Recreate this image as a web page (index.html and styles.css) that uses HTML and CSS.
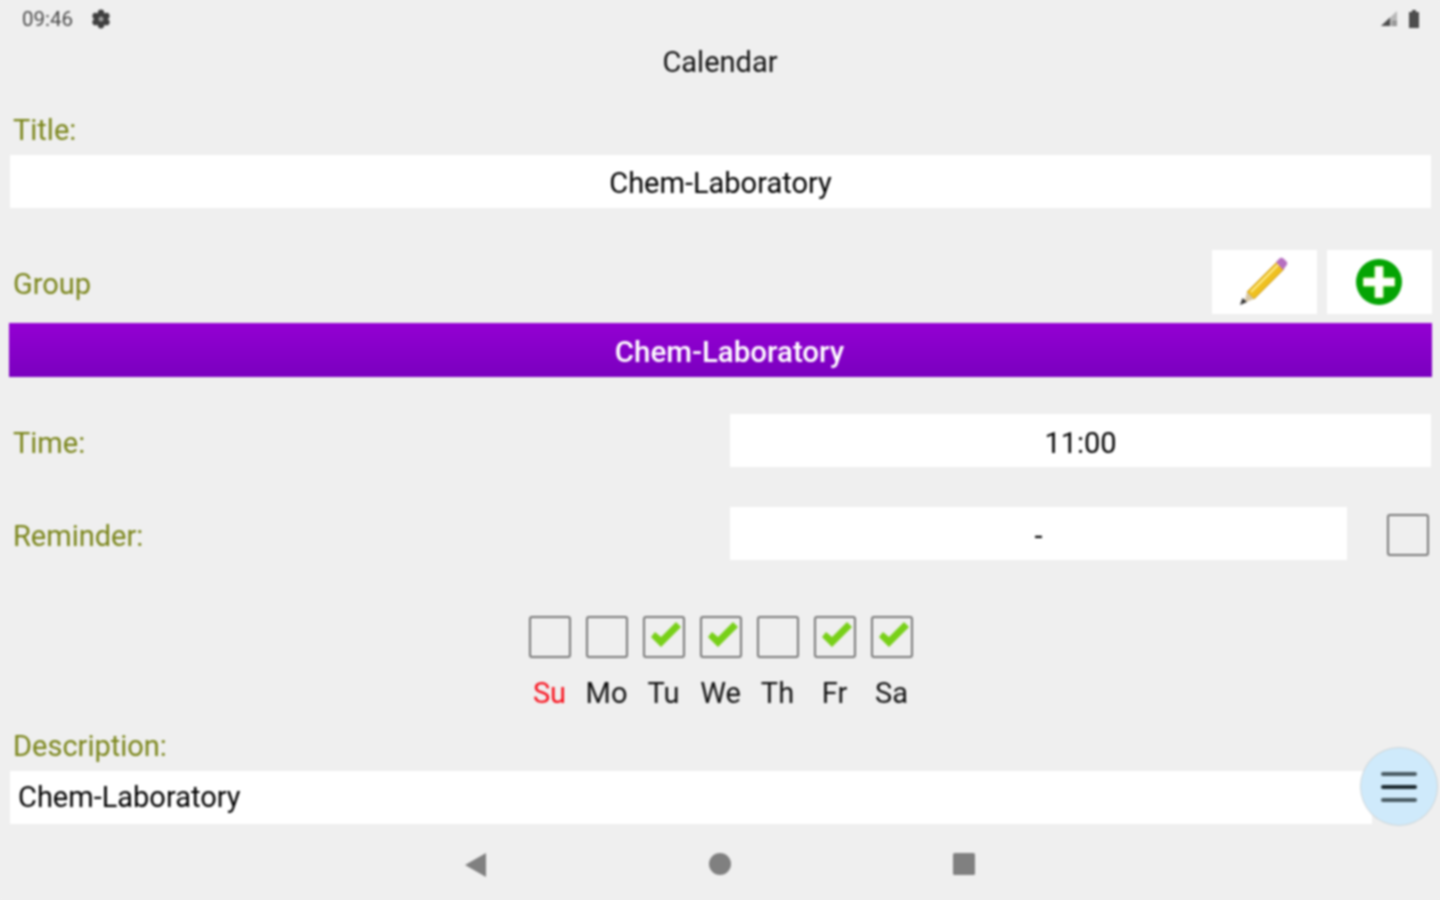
FILE: index.html
```html
<!DOCTYPE html>
<html lang="en">
<head>
<meta charset="utf-8">
<title>Calendar</title>
<link rel="stylesheet" href="styles.css">
</head>
<body>
<div class="screen">
  <div class="status">
    <div class="status-left">
      <span class="clock">09:46</span>
      <svg class="gear" width="20" height="20" viewBox="0 0 24 24"><g fill="#3f3f3f"><circle cx="12" cy="4.500" r="3.800"/><circle cx="12" cy="19.500" r="3.800"/><circle cx="5.500" cy="8.250" r="3.800"/><circle cx="18.500" cy="8.250" r="3.800"/><circle cx="5.500" cy="15.750" r="3.800"/><circle cx="18.500" cy="15.750" r="3.800"/><circle cx="12" cy="12" r="7"/></g><circle cx="12" cy="12" r="3" fill="#9a9a9a"/></svg>
    </div>
    <div class="status-right">
      <svg width="18" height="18" viewBox="0 0 18 18"><path fill="#b8b8b8" d="M17 1v15H1z"/><path fill="#4d4d4d" d="M1 16l9-8.500V16z"/><rect x="12" y="11" width="5" height="2" fill="#8a8a8a"/><rect x="12" y="14" width="5" height="2" fill="#8a8a8a"/></svg>
      <svg width="12" height="20" viewBox="0 0 12 20"><path fill="#4d4d4d" d="M4 1h4v2h3v16H1V3h3z"/></svg>
    </div>
  </div>
  <div class="app-title">Calendar</div>

  <div class="label label-title">Title:</div>
  <div class="field field-full">Chem-Laboratory</div>

  <div class="group-row">
    <div class="label label-low">Group</div>
    <div class="tools">
      <div class="tool">
        <svg class="pencil" width="50" height="50" viewBox="0 0 50 50">
          <path fill="#efc01f" stroke="#c9960f" stroke-width="1" d="M8 35 L38 5 L45 12 L15 42 Z"/>
          <path fill="none" stroke="#fbe88a" stroke-width="2" d="M12 35 L40 7"/>
          <path fill="#b66fc0" d="M37 5 L41 1 Q43 0 45 2 L48 5 Q49 7 47 9 L44 13 Z"/>
          <path fill="#d8c8a8" d="M8 35 L15 42 L5 46 Z"/>
          <path fill="#333" d="M3.500 41 L8 45 L1 48 Z"/>
        </svg>
      </div>
      <div class="tool">
        <svg class="plus" width="48" height="48" viewBox="0 0 48 48">
          <circle cx="24" cy="24" r="23" fill="#04a404"/>
          <path fill="#fff" stroke="#d9f5a8" stroke-width="1" d="M20 8.500h8V20h11.500v8H28v11.500h-8V28H8.500v-8H20z"/>
        </svg>
      </div>
    </div>
  </div>
  <div class="group-bar">Chem-Laboratory</div>

  <div class="row row-time">
    <div class="label label-low">Time:</div>
    <div class="field field-half">11:00</div>
  </div>
  <div class="row row-reminder">
    <div class="label label-low">Reminder:</div>
    <div class="reminder-right">
      <div class="field field-reminder">-</div>
      <span class="box box-reminder"></span>
    </div>
  </div>

  <div class="days">
    <div class="day"><span class="box"></span><span class="day-name sun">Su</span></div>
    <div class="day"><span class="box"></span><span class="day-name">Mo</span></div>
    <div class="day"><span class="box"><svg class="tick" viewBox="0 0 42 42"><path d="M8 21l4-5 6 5L33 6l5 5-20 20z"/></svg></span><span class="day-name">Tu</span></div>
    <div class="day"><span class="box"><svg class="tick" viewBox="0 0 42 42"><path d="M8 21l4-5 6 5L33 6l5 5-20 20z"/></svg></span><span class="day-name">We</span></div>
    <div class="day"><span class="box"></span><span class="day-name">Th</span></div>
    <div class="day"><span class="box"><svg class="tick" viewBox="0 0 42 42"><path d="M8 21l4-5 6 5L33 6l5 5-20 20z"/></svg></span><span class="day-name">Fr</span></div>
    <div class="day"><span class="box"><svg class="tick" viewBox="0 0 42 42"><path d="M8 21l4-5 6 5L33 6l5 5-20 20z"/></svg></span><span class="day-name">Sa</span></div>
  </div>

  <div class="label label-desc">Description:</div>
  <div class="field field-desc">Chem-Laboratory</div>

  <div class="nav">
    <svg width="24" height="26" viewBox="0 0 24 26"><path fill="#808080" d="M22 1v24L1 13z"/></svg>
    <svg width="24" height="24" viewBox="0 0 24 24"><circle cx="12" cy="12" r="11" fill="#808080"/></svg>
    <svg width="24" height="24" viewBox="0 0 24 24"><rect x="1" y="1" width="22" height="22" rx="1.500" fill="#808080"/></svg>
  </div>

  <div class="fab"><span class="fab-line"></span><span class="fab-line fab-mid"></span><span class="fab-line"></span></div>
</div>
</body>
</html>
```
FILE: styles.css
```css
* { box-sizing: border-box; }
html, body { margin: 0; padding: 0; }
body { width: 1440px; height: 900px; overflow: hidden; background: #efefef; }
.screen {
  position: relative;
  width: 1440px;
  height: 900px;
  background: #efefef;
  font-family: Roboto, "Liberation Sans", sans-serif;
  font-size: 29px;
  color: #111;
  filter: blur(0.8px);
}
.status { height: 38px; display: flex; justify-content: space-between; align-items: center; padding: 0 20px 0 22px; }
.status-left, .status-right { display: flex; align-items: center; }
.status-left { gap: 18px; }
.status-right { gap: 10px; }
.clock { font-size: 20.5px; color: #4a4a4a; }
.gear { display: block; }
.app-title { height: 48px; line-height: 48px; text-align: center; }
.label { color: #7a851a; line-height: 40px; }
.label-title { margin: 24px 0 0 13px; height: 40px; line-height: 40px; }
.label-low { padding-top: 4px; }
.field { background: #fff; height: 53px; line-height: 56px; text-align: center; color: #000; }
.field-full { margin: 5px 9px 0 10px; }
.group-row { display: flex; justify-content: space-between; align-items: center; margin: 42px 8px 0 13px; height: 64px; }
.tools { display: flex; gap: 10px; }
.tool { width: 105px; height: 64px; background: #fff; display: flex; align-items: center; justify-content: center; }
.pencil { margin-left: -2px; }
.plus { margin-left: -2px; }
.group-bar {
  margin: 9px 8px 0 9px;
  height: 54px;
  line-height: 58px;
  padding-left: 18px;
  text-align: center;
  font-weight: 500;
  font-size: 29.5px;
  color: #fff;
  background: linear-gradient(#9400d3, #7a00bf);
}
.row { display: flex; align-items: center; justify-content: space-between; padding-left: 13px; }
.row-time { margin: 37px 9px 0 0; }
.row-reminder { margin: 40px 11px 0 0; }
.field-half { width: 701px; line-height: 58px; }
.reminder-right { display: flex; align-items: center; gap: 40px; }
.field-reminder { width: 617px; line-height: 58px; }
.box { display: block; position: relative; width: 42px; height: 42px; border: 2px solid #787878; border-radius: 3px; }
.box-reminder { top: 1px; }
.tick { position: absolute; left: -2px; top: -2px; width: 42px; height: 42px; }
.tick path { fill: #78d018; }
.days { display: flex; justify-content: center; gap: 15px; margin-top: 56px; padding-left: 1px; }
.day { width: 42px; display: flex; flex-direction: column; align-items: center; }
.day-name { margin-top: 16px; line-height: 38px; height: 40px; color: #111; white-space: nowrap; }
.sun { color: #f8101c; }
.label-desc { margin: 12px 0 0 13px; height: 40px; line-height: 40px; }
.field-desc { margin: 5px 0 0 10px; width: 1362px; padding-left: 8px; text-align: left; line-height: 52px; }
.nav { display: flex; justify-content: center; gap: 220px; margin-top: 28px; }
.nav svg { display: block; }
.fab {
  position: absolute;
  left: 1360px;
  top: 747px;
  width: 78px;
  height: 79px;
  border-radius: 50%;
  background: #cfeafb;
  border: 1px solid #cfd6d9;
  display: flex;
  flex-direction: column;
  align-items: center;
  justify-content: center;
  gap: 9px;
}
.fab-line { display: block; width: 36px; height: 4px; border-radius: 2px; background: #4a5c64; }
.fab-mid { background: #1c2a30; }
```
